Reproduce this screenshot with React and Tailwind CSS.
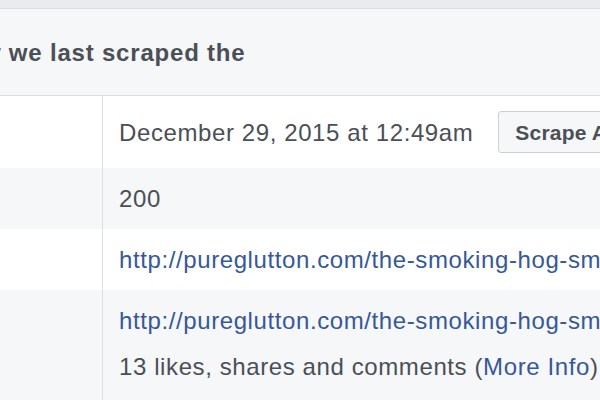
import React from 'react'

const rows = [
  { bg: 'bg-white', content: 'time' },
  { bg: 'bg-[#f6f7f9]', content: 'code' },
  { bg: 'bg-white', content: 'fetched' },
  { bg: 'bg-[#f6f7f9]', content: 'canonical' },
]

function Cell({ type }) {
  if (type === 'time') {
    return (
      <div className="flex items-center">
        <span>December 29, 2015 at 12:49am</span>
        <button className="ml-[25px] h-[42px] px-4 rounded-[3px] border border-[#ced0d4] bg-[#f6f7f9] text-[21px] font-bold text-[#4b4f56] whitespace-nowrap tracking-[0.2px]">
          Scrape Again
        </button>
      </div>
    )
  }
  if (type === 'code') return <div>200</div>
  if (type === 'fetched') {
    return (
      <a className="text-[#365899]" href="#">
        http://pureglutton.com/the-smoking-hog-smokehouse-restaurant/
      </a>
    )
  }
  return (
    <div>
      <a className="text-[#365899]" href="#">
        http://pureglutton.com/the-smoking-hog-smokehouse-restaurant/
      </a>
      <div className="mt-[17px]">
        13 likes, shares and comments (<a className="text-[#365899]" href="#">More Info</a>)
      </div>
    </div>
  )
}

export default function App() {
  return (
    <div
      className="w-[600px] h-[400px] overflow-hidden bg-white text-[#4b4f56]"
      style={{ fontFamily: '"Liberation Sans", Arial, sans-serif' }}
    >
      {/* top page band */}
      <div className="h-[9px] bg-[#e9ebee] border-b border-[#dddfe2]" />

      {/* section header */}
      <div className="h-[87px] flex items-center pt-[2px] bg-[#f6f7f9] border-b border-[#dddfe2] whitespace-nowrap">
        <span className="-ml-[49px] text-[24px] font-bold tracking-[0.8px] text-[#4b4f56]">how we last scraped the</span>
      </div>

      {/* table */}
      <div className="text-[24px] leading-[29px] tracking-[0.6px]">
        {rows.map((r) => (
          <div key={r.content} className={`flex ${r.bg}`}>
            <div className="w-[103px] shrink-0 border-r border-[#dddfe2]" />
            <div className={`pl-4 whitespace-nowrap ${r.content === 'time' ? 'py-[15px]' : 'py-4'}`}>
              <Cell type={r.content} />
            </div>
          </div>
        ))}
        <div className="flex bg-[#f6f7f9] h-[40px]">
          <div className="w-[103px] shrink-0 border-r border-[#dddfe2]" />
        </div>
      </div>
    </div>
  )
}
